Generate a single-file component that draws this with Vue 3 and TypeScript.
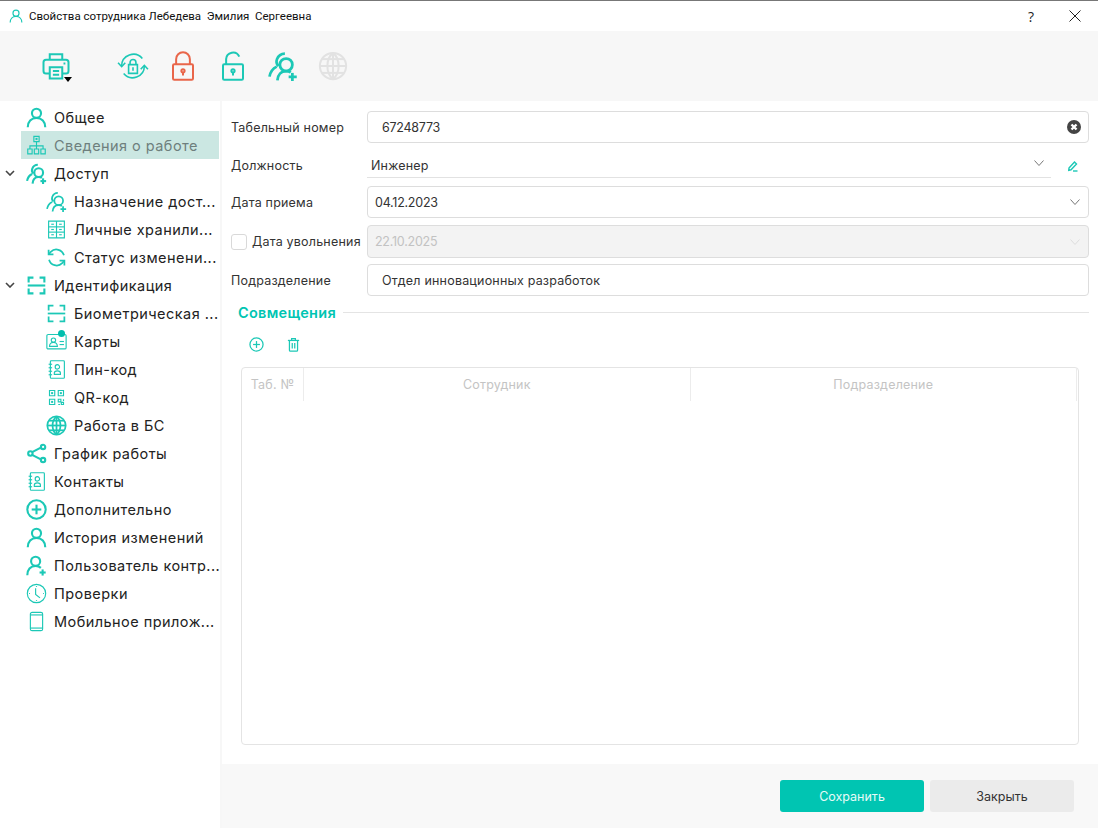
<script setup lang="ts">
import { ref } from 'vue';

interface NavItem {
  label: string;
  icon: string;
  child?: boolean;
  arrow?: boolean;
  active?: boolean;
  thin?: boolean;
}

// иконки: набор контуров на сетке 24x24
const icons: Record<string, string[]> = {
  user: ['M12 2a5.2 5.2 0 1 1 0 10.4a5.2 5.2 0 0 1 0-10.4z', 'M2 23c0-6 4-10.500 10-10.500s10 4.500 10 10.500'],
  userAdd: ['M11 2a5.2 5.2 0 1 1 0 10.4a5.2 5.2 0 0 1 0-10.4z', 'M1.500 23c0-6 3.500-10.500 9.500-10.500c2.500 0 4.500.8 6 2.200', 'M19 16.500v7', 'M15.500 20h7'],
  users: ['M8.500 12c-1.600-1.300-2-3.600-1.300-5.500C8.200 3.800 10.500 2 13.500 2', 'M7 12.500C3.800 14 1.800 17 1.200 20.500', 'M14.500 6a5 5 0 1 1 0 10a5 5 0 0 1 0-10z', 'M7.500 23.500c.3-4.500 3-7.500 7-7.500c1.400 0 2.700.4 3.700 1.100', 'M19.500 17.500v6.500', 'M16.500 20.700h6.500'],
  org: ['M9 1.500h6v6H9z', 'M12 7.500v5', 'M4.500 16v-3.500h15V16', 'M12 12.500V16', 'M2 16h5v5.500H2z', 'M9.500 16h5v5.500h-5z', 'M17 16h5v5.500h-5z', 'M11.500 4h1v1h-1z'],
  vault: ['M3 2.500h18v19H3z', 'M3 9h18', 'M3 15h18', 'M12 2.500v19', 'M6 6h3', 'M15 6h3', 'M6 12h3', 'M15 12h3', 'M6 18h3', 'M15 18h3'],
  sync: ['M20.500 9.500A9 9 0 0 0 5.500 5.500L3 8.500', 'M3 3v5.500h5.500', 'M3.500 14.500A9 9 0 0 0 18.500 18.500L21 15.500', 'M21 21v-5.500h-5.500'],
  scan: ['M3 8.500V3h5.500', 'M15.500 3H21v5.500', 'M3 15.500V21h5.500', 'M15.500 21H21v-5.500', 'M2 12h20'],
  card: ['M2.500 4h19a1.500 1.500 0 0 1 1.500 1.500v13.500a1.500 1.500 0 0 1-1.500 1.500h-19A1.500 1.500 0 0 1 1 19V5.500A1.500 1.500 0 0 1 2.500 4z', 'M8.500 8a2.500 2.500 0 1 1 0 5a2.500 2.500 0 0 1 0-5z', 'M4 17.500c0-2.500 2-4.500 4.500-4.500s4.500 2 4.500 4.500z', 'M15.500 12h5', 'M15.500 15.500h5'],
  book: ['M6 2h14a1 1 0 0 1 1 1v18a1 1 0 0 1-1 1H6a1 1 0 0 1-1-1V3a1 1 0 0 1 1-1z', 'M3 6h4', 'M3 10h4', 'M3 14h4', 'M3 18h4', 'M13 6.500a2.500 2.500 0 1 1 0 5a2.500 2.500 0 0 1 0-5z', 'M9.500 17.500V16c0-1.500 1.500-2.500 3.500-2.500s3.500 1 3.500 2.500v1.500z'],
  qr: ['M4 4h6v6H4z', 'M14 4h6v6h-6z', 'M4 14h6v6H4z', 'M6.500 6.500h1v1h-1z', 'M16.500 6.500h1v1h-1z', 'M6.500 16.500h1v1h-1z', 'M14 14h3v3h-3z', 'M17.500 17.500h2.500v2.500h-2.500z', 'M14 20h2', 'M20 14v2'],
  globe: ['M12 1.500a10.500 10.500 0 1 1 0 21a10.500 10.500 0 0 1 0-21z', 'M12 1.500c-6 5-6 16 0 21', 'M12 1.500c6 5 6 16 0 21', 'M12 1.500v21', 'M1.500 12h21', 'M3 6.500h18', 'M3 17.500h18'],
  share: ['M5 9.500a2.500 2.500 0 1 1 0 5a2.500 2.500 0 0 1 0-5z', 'M19.500 2a2.500 2.500 0 1 1 0 5a2.500 2.500 0 0 1 0-5z', 'M19.500 17a2.500 2.500 0 1 1 0 5a2.500 2.500 0 0 1 0-5z', 'M7 10.500l10.500-5.500', 'M7 13.500l10.500 5.500'],
  plus: ['M12 1.500a10.500 10.500 0 1 1 0 21a10.500 10.500 0 0 1 0-21z', 'M12 6.500v11', 'M6.500 12h11'],
  clock: ['M12 1.500a10.500 10.500 0 1 1 0 21a10.500 10.500 0 0 1 0-21z', 'M11 6v7l5 4', 'M12 3.500v1', 'M12 19.500v1', 'M3.500 12h1', 'M19.500 12h1'],
  phone: ['M7 1.500h10a2 2 0 0 1 2 2v17a2 2 0 0 1-2 2H7a2 2 0 0 1-2-2v-17a2 2 0 0 1 2-2z', 'M5 4.500h14', 'M5 19.500h14'],
  printer: ['M7 7V2.500h10V7', 'M7 18H4a2 2 0 0 1-2-2V9a2 2 0 0 1 2-2h16a2 2 0 0 1 2 2v7a2 2 0 0 1-2 2h-3', 'M7 13h10v9H7z', 'M9.500 16h5', 'M9.500 19h5', 'M18 10h1.500'],
  lock: ['M5 10.500h14a1 1 0 0 1 1 1V22a1 1 0 0 1-1 1H5a1 1 0 0 1-1-1V11.500a1 1 0 0 1 1-1z', 'M6.500 10.500V6.500a5.500 5.500 0 0 1 11 0v4', 'M12 14.500a1.300 1.300 0 1 1 0 2.600a1.300 1.300 0 0 1 0-2.600z', 'M12 17v2.500'],
  unlock: ['M5 10.500h14a1 1 0 0 1 1 1V22a1 1 0 0 1-1 1H5a1 1 0 0 1-1-1V11.500a1 1 0 0 1 1-1z', 'M6.500 10.500V6.500a5.500 5.500 0 0 1 10.500-2', 'M12 14.500a1.300 1.300 0 1 1 0 2.600a1.300 1.300 0 0 1 0-2.600z', 'M12 17v2.500'],
  lockSync: ['M3.500 12a8.800 8.800 0 0 1 15.500-5.700', 'M20.500 12a8.800 8.800 0 0 1-15.500 5.700', 'M.8 9.500l2.700 3l2.700-3', 'M17.800 14.500l2.700-3l2.700 3', 'M8.700 11h6.600v6.500H8.700z', 'M9.800 11V9.300a2.200 2.200 0 0 1 4.400 0V11', 'M12 13v2.500'],
  trash: ['M3 5.500h18', 'M9 5.500V2.500h6v3', 'M5.500 5.500v15.500a1.500 1.500 0 0 0 1.500 1.500h10a1.500 1.500 0 0 0 1.500-1.500V5.500', 'M10 9.500v9', 'M14 9.500v9'],
  pencil: ['M4 16L15 4l4 4L8 19.500l-4.500 1z', 'M12 22h9'],
};

const toolbar = [
  { icon: 'lockSync', cls: 'tool-sync' },
  { icon: 'lock', cls: 'tool-red' },
  { icon: 'unlock', cls: 'tool-plain' },
  { icon: 'users', cls: 'tool-users' },
  { icon: 'globe', cls: 'tool-off' },
];

const nav: NavItem[] = [
  { label: 'Общее', icon: 'user' },
  { label: 'Сведения о работе', icon: 'org', active: true, thin: true },
  { label: 'Доступ', icon: 'users', arrow: true },
  { label: 'Назначение дост...', icon: 'users', child: true },
  { label: 'Личные хранили...', icon: 'vault', child: true, thin: true },
  { label: 'Статус изменени...', icon: 'sync', child: true },
  { label: 'Идентификация', icon: 'scan', arrow: true },
  { label: 'Биометрическая ...', icon: 'scan', child: true },
  { label: 'Карты', icon: 'card', child: true, thin: true },
  { label: 'Пин-код', icon: 'book', child: true, thin: true },
  { label: 'QR-код', icon: 'qr', child: true, thin: true },
  { label: 'Работа в БС', icon: 'globe', child: true },
  { label: 'График работы', icon: 'share' },
  { label: 'Контакты', icon: 'book', thin: true },
  { label: 'Дополнительно', icon: 'plus' },
  { label: 'История изменений', icon: 'user' },
  { label: 'Пользователь контр...', icon: 'userAdd' },
  { label: 'Проверки', icon: 'clock', thin: true },
  { label: 'Мобильное прилож...', icon: 'phone', thin: true },
];

const tabNumber = ref('67248773');
const columns = [
  { title: 'Таб. №', cls: 'col-num' },
  { title: 'Сотрудник', cls: 'col-wide' },
  { title: 'Подразделение', cls: 'col-wide' },
];
</script>

<template>
  <div class="window">
    <header class="titlebar">
      <svg class="title-icon" viewBox="0 0 24 24"><path v-for="d in icons.user" :key="d" :d="d" /></svg>
      <span class="title-text">Свойства сотрудника Лебедева&nbsp; Эмилия&nbsp; Сергеевна</span>
      <span class="title-help">?</span>
      <svg class="title-close" viewBox="0 0 12 12"><path d="M.5.5l11 11M11.500.5l-11 11" /></svg>
    </header>

    <div class="toolbar">
      <div class="tool-print">
        <svg class="tool-icon" viewBox="0 0 24 24"><path v-for="d in icons.printer" :key="d" :d="d" /></svg>
        <i class="print-caret"></i>
      </div>
      <svg v-for="t in toolbar" :key="t.icon" class="tool-icon" :class="t.cls" viewBox="0 0 24 24">
        <path v-for="d in icons[t.icon]" :key="d" :d="d" />
      </svg>
    </div>

    <div class="body">
      <nav class="sidebar">
        <div
          v-for="item in nav"
          :key="item.label"
          class="nav-row"
          :class="{ child: item.child, active: item.active }"
        >
          <svg v-if="item.arrow" class="nav-arrow" viewBox="0 0 10 6"><path d="M1 1l4 4l4-4" /></svg>
          <svg class="nav-icon" :class="{ thin: item.thin }" viewBox="0 0 24 24"><path v-for="d in icons[item.icon]" :key="d" :d="d" /></svg>
          <i v-if="item.label === 'Карты'" class="nav-dot"></i>
          <span class="nav-label">{{ item.label }}</span>
        </div>
      </nav>

      <main class="main">
        <div class="form">
          <div class="field field-tab">
            <label>Табельный номер</label>
            <div class="input">
              <span class="digits">{{ tabNumber }}</span>
              <svg class="clear" viewBox="0 0 14 14">
                <circle cx="7" cy="7" r="7" />
                <path d="M4.500 4.500l5 5M9.500 4.500l-5 5" />
              </svg>
            </div>
          </div>
          <div class="field field-post">
            <label>Должность</label>
            <div class="underline">
              <span>Инженер</span>
              <svg class="chevron" viewBox="0 0 10 6"><path d="M.5.500L5 5.500L9.500.500" /></svg>
            </div>
            <svg class="edit" viewBox="0 0 24 24"><path v-for="d in icons.pencil" :key="d" :d="d" /></svg>
          </div>
          <div class="field field-hire">
            <label>Дата приема</label>
            <div class="input date">
              <span class="digits">04.12.2023</span>
              <svg class="chevron" viewBox="0 0 10 6"><path d="M.5.500L5 5.500L9.500.500" /></svg>
            </div>
          </div>
          <div class="field field-fire">
            <label class="check-label"><i class="checkbox"></i>Дата увольнения</label>
            <div class="input date disabled">
              <span class="digits">22.10.2025</span>
              <svg class="chevron" viewBox="0 0 10 6"><path d="M.5.500L5 5.500L9.500.500" /></svg>
            </div>
          </div>
          <div class="field field-dept">
            <label>Подразделение</label>
            <div class="input">
              <span>Отдел инновационных разработок</span>
            </div>
          </div>
        </div>

        <div class="section-head">
          <span>Совмещения</span>
          <i></i>
        </div>

        <div class="grid-tools">
          <svg viewBox="0 0 24 24"><path v-for="d in icons.plus" :key="d" :d="d" /></svg>
          <svg viewBox="0 0 24 24"><path v-for="d in icons.trash" :key="d" :d="d" /></svg>
        </div>

        <div class="table">
          <div class="table-head">
            <div v-for="c in columns" :key="c.title" class="cell" :class="c.cls">{{ c.title }}</div>
          </div>
        </div>

        <footer class="footer">
          <button class="btn primary">Сохранить</button>
          <button class="btn">Закрыть</button>
        </footer>
      </main>
    </div>
  </div>
</template>

<style scoped>
.window {
  width: 1098px;
  height: 828px;
  display: flex;
  flex-direction: column;
  background: #fff;
  font-family: Inter, "Noto Sans", sans-serif;
  color: #2b2b2b;
  overflow: hidden;
}

svg {
  fill: none;
  stroke: #1cc8b6;
  stroke-width: 2;
  flex: none;
}

.titlebar {
  height: 31px;
  box-sizing: border-box;
  border-top: 1px solid #777;
  display: flex;
  align-items: center;
  padding: 0 17px 0 9px;
}

.title-icon {
  width: 14px;
  height: 14px;
}

.title-text {
  margin-left: 6px;
  font: 11.5px Roboto, sans-serif;
  color: #111;
}

.title-help {
  margin-left: auto;
  font: 14px "Open Sans", sans-serif;
  color: #222;
}

.title-close {
  width: 12px;
  height: 12px;
  margin-left: 35px;
  stroke: #222;
  stroke-width: 1;
}

.toolbar {
  height: 70px;
  background: #f7f7f7;
  display: flex;
  align-items: center;
  gap: 20px;
  padding-left: 41px;
}

.tool-print {
  position: relative;
  width: 30px;
  height: 30px;
  margin-right: 26px;
}

.tool-icon {
  width: 30px;
  height: 30px;
  stroke-width: 1.6;
}

.print-caret {
  position: absolute;
  left: 23px;
  top: 26px;
  border: 4.500px solid transparent;
  border-top: 5px solid #000;
  border-bottom: 0;
}

.tool-sync {
  width: 32px;
  height: 32px;
  stroke-width: 1.2;
  margin-right: -1px;
}

.tool-red {
  stroke: #e9664a;
}

.tool-users {
  stroke-width: 2.2;
}

.tool-off {
  stroke: #e2e2e2;
}

.body {
  flex: 1;
  display: flex;
  min-height: 0;
}

.sidebar {
  width: 222px;
  flex: none;
  padding-top: 2px;
  box-sizing: border-box;
  border-right: 2px solid #f7f7f7;
}

.nav-row {
  position: relative;
  height: 28px;
  margin: 0 1px 0 21px;
  padding-left: 5px;
  display: flex;
  align-items: center;
  font-size: 14.5px;
  letter-spacing: 0.45px;
  color: #222;
}

.nav-row.child {
  padding-left: 25px;
}

.nav-row.active {
  background: #cbe7e2;
  color: #6e7f7d;
}

.nav-arrow {
  position: absolute;
  left: -16px;
  top: 11px;
  width: 10px;
  height: 6px;
  stroke: #444;
  stroke-width: 1.6;
}

.nav-icon {
  width: 21px;
  height: 21px;
  stroke-width: 2.4;
}

.nav-row.child .nav-icon {
  stroke-width: 2;
}

.nav-row .nav-icon.thin {
  stroke-width: 1.3;
}

.nav-dot {
  position: absolute;
  left: 37px;
  top: 3px;
  width: 7px;
  height: 7px;
  border-radius: 50%;
  background: #00bfae;
}

.nav-label {
  margin-left: 7px;
  white-space: nowrap;
}

.main {
  flex: 1;
  display: flex;
  flex-direction: column;
  min-width: 0;
}

.form {
  padding: 10px 9px 0;
}

.field {
  display: flex;
  align-items: center;
  font-size: 12.5px;
  letter-spacing: 0.2px;
}

.field label {
  width: 136px;
  flex: none;
  color: #333;
}

.digits {
  letter-spacing: -0.25px;
}

.field-post {
  margin-top: 3px;
  height: 31px;
  align-items: flex-start;
}

.field-hire {
  margin-top: 9px;
}

.field-fire {
  margin-top: 7px;
}

.field-dept {
  margin-top: 6px;
}

.field-post label {
  padding-top: 12px;
}

.input {
  flex: 1;
  height: 32px;
  box-sizing: border-box;
  border: 1px solid #ddd;
  border-radius: 4px;
  display: flex;
  align-items: center;
  justify-content: space-between;
  padding: 0 7px 0 14px;
  color: #333;
}

.field-fire .input {
  height: 33px;
}

.input.date {
  padding-left: 7px;
}

.input.disabled {
  background: #f3f3f3;
  color: #c2c2c2;
}

.input.disabled .chevron {
  stroke: #ddd;
}

.clear {
  width: 14px;
  height: 14px;
  fill: #444;
  stroke: none;
}

.clear path {
  stroke: #fff;
  stroke-width: 2.4;
}

.chevron {
  width: 10px;
  height: 6px;
  margin-right: 1px;
  stroke: #777;
  stroke-width: 1;
}

.underline {
  flex: 1;
  height: 32px;
  box-sizing: border-box;
  border-bottom: 1px solid #e2e2e2;
  display: flex;
  align-items: center;
  justify-content: space-between;
  padding: 8px 6px 0 4px;
  color: #333;
}

.underline .chevron {
  margin-top: -5px;
}

.edit {
  width: 12px;
  height: 12px;
  margin: 14px 10px 0 16px;
  stroke-width: 2.8;
}

.check-label {
  display: flex;
  align-items: center;
}

.checkbox {
  width: 14px;
  height: 14px;
  border: 1px solid #d9d9d9;
  border-radius: 3px;
  margin-right: 5px;
}

.section-head {
  display: flex;
  align-items: center;
  margin: 7px 9px 0 16px;
  height: 18px;
  font-size: 14.5px;
  font-weight: 600;
  letter-spacing: 0.3px;
  color: #00c5b2;
}

.section-head i {
  flex: 1;
  height: 1px;
  margin-left: 7px;
  background: #e4e4e4;
}

.grid-tools {
  display: flex;
  align-items: center;
  gap: 22px;
  height: 14px;
  margin: 16px 0 0 27px;
}

.grid-tools svg {
  width: 15px;
  height: 15px;
}

.table {
  margin: 16px 19px 0;
  height: 378px;
  box-sizing: border-box;
  border: 1px solid #e4e4e4;
  border-radius: 4px;
}

.table-head {
  display: flex;
  height: 33px;
  padding-right: 1px;
}

.cell {
  display: flex;
  align-items: center;
  justify-content: center;
  font-size: 12.5px;
  letter-spacing: 0.2px;
  color: #c4c4c4;
  border-right: 1px solid #ececec;
}

.col-num {
  width: 61px;
  flex: none;
}

.col-wide {
  flex: 1;
}

.footer {
  margin-top: 19px;
  flex: 1;
  background: #f8f8f8;
  display: flex;
  align-items: flex-start;
  justify-content: flex-end;
  gap: 6px;
  padding: 16px 24px 0 0;
}

.btn {
  width: 144px;
  height: 32px;
  border: 0;
  border-radius: 3px;
  background: #ebebeb;
  color: #333;
  font: 12.5px Inter, "Noto Sans", sans-serif;
}

.btn.primary {
  background: #00c5b2;
  color: #e6fbf8;
}
</style>
